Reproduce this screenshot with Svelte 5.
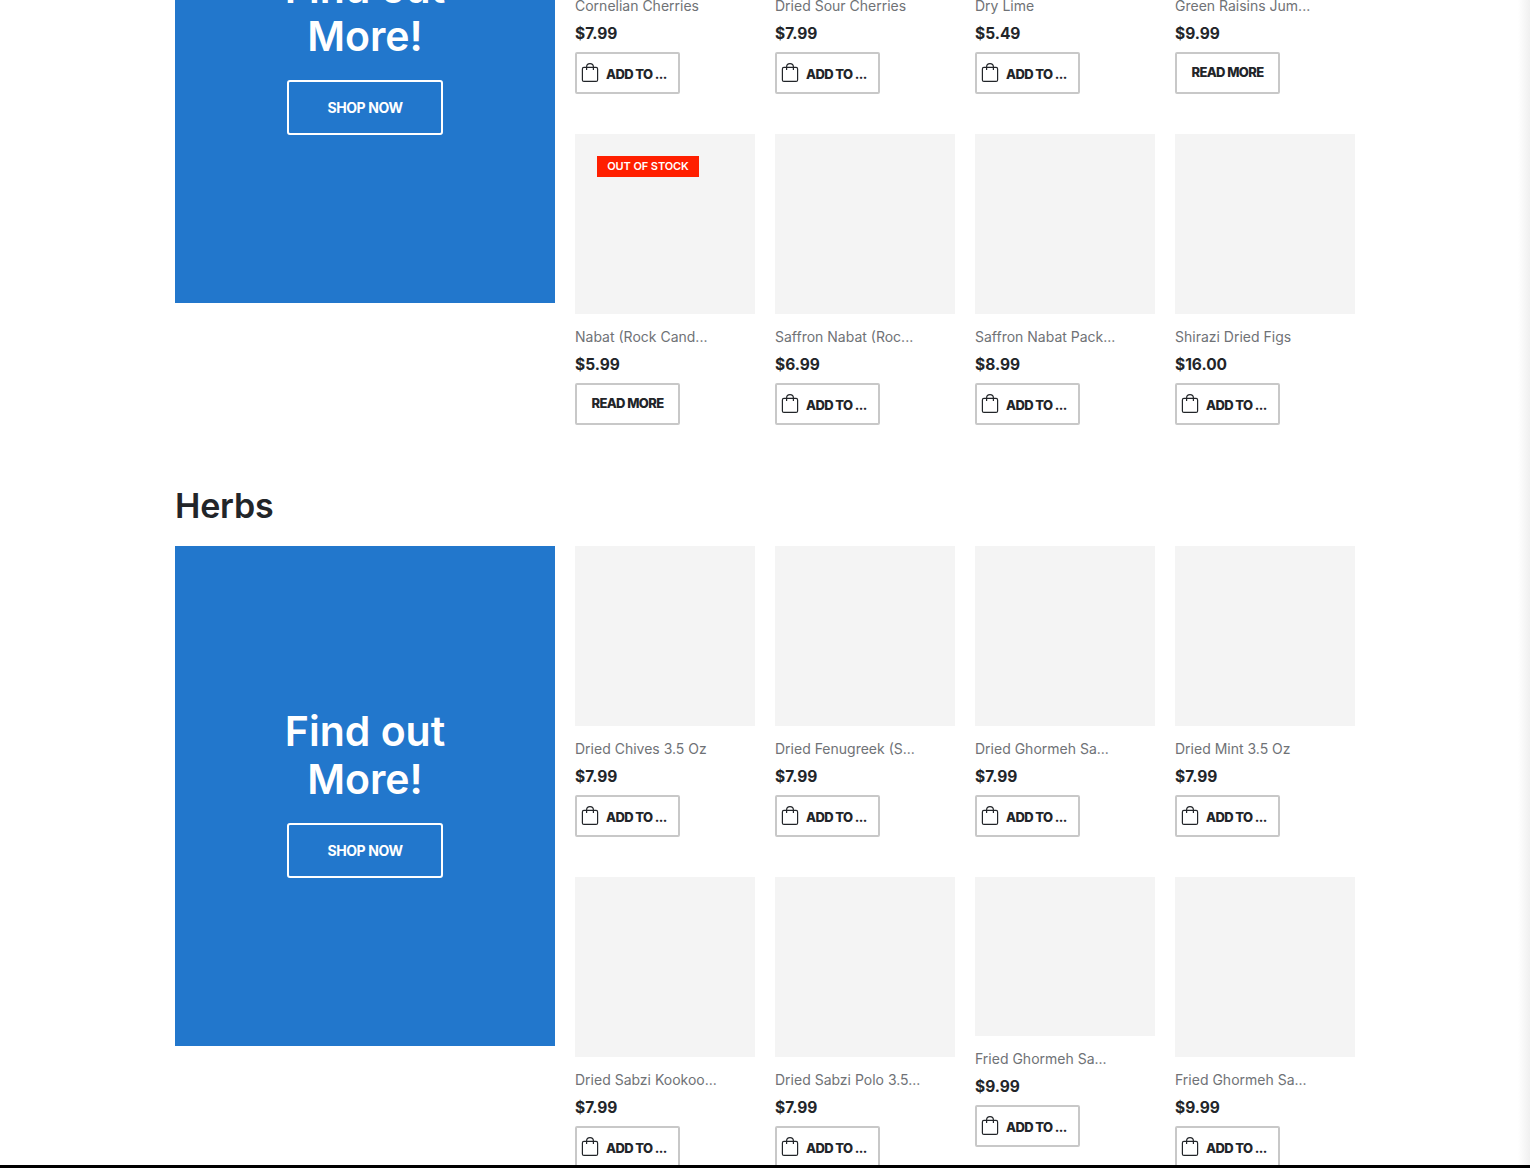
<script>
  const sections = [
    {
      title: "",
      products: [
        { name: "Cornelian Cherries", price: "$7.99" },
        { name: "Dried Sour Cherries", price: "$7.99" },
        { name: "Dry Lime", price: "$5.49" },
        { name: "Green Raisins Jum...", price: "$9.99", readMore: true },
        { name: "Nabat (Rock Cand...", price: "$5.99", readMore: true, soldOut: true },
        { name: "Saffron Nabat (Roc...", price: "$6.99" },
        { name: "Saffron Nabat Pack...", price: "$8.99" },
        { name: "Shirazi Dried Figs", price: "$16.00" }
      ]
    },
    {
      title: "Herbs",
      products: [
        { name: "Dried Chives 3.5 Oz", price: "$7.99" },
        { name: "Dried Fenugreek (S...", price: "$7.99" },
        { name: "Dried Ghormeh Sa...", price: "$7.99" },
        { name: "Dried Mint 3.5 Oz", price: "$7.99" },
        { name: "Dried Sabzi Kookoo...", price: "$7.99" },
        { name: "Dried Sabzi Polo 3.5...", price: "$7.99" },
        { name: "Fried Ghormeh Sa...", price: "$9.99", short: true },
        { name: "Fried Ghormeh Sa...", price: "$9.99" }
      ]
    }
  ];
</script>

<div class="page">
  <main class="container">
    {#each sections as section}
      <section class="section">
        {#if section.title}
          <h2 class="heading">{section.title}</h2>
        {/if}
        <div class="layout">
          <div class="banner">
            <h3>Find out More!</h3>
            <a class="shop" href="#shop">SHOP NOW</a>
          </div>
          <div class="products">
            {#each section.products as product}
              <article class="product">
                <div class="thumb" class:short={product.short}>
                  {#if product.soldOut}
                    <span class="badge">OUT OF STOCK</span>
                  {/if}
                </div>
                <div class="name">{product.name}</div>
                <div class="price">{product.price}</div>
                {#if product.readMore}
                  <a class="btn more" href="#more">READ MORE</a>
                {:else}
                  <a class="btn" href="#add">
                    <svg width="18" height="20" viewBox="0 0 18 20" fill="none" stroke="#222529" stroke-width="1.2">
                      <rect x="1.4" y="5.4" width="15.2" height="14" rx="1.5" />
                      <path d="M5.6 8V5a3.4 3.4 0 0 1 6.8 0v3" />
                    </svg>
                    <span>ADD TO ...</span>
                  </a>
                {/if}
              </article>
            {/each}
          </div>
        </div>
      </section>
    {/each}
  </main>
  <div class="edge"></div>
  <div class="bottom"></div>
</div>

<style>
  :global(body) {
    margin: 0;
    background: #fff;
    overflow: hidden;
  }

  .page {
    position: relative;
    height: 1168px;
    overflow: hidden;
    font-family: Inter, "Noto Sans", sans-serif;
    color: #222529;
  }

  .container {
    width: 1180px;
    margin: -197px 0 0 175px;
    display: flex;
    flex-direction: column;
    gap: 40px;
  }

  .heading {
    margin: 21px 0 20px;
    font-size: 34px;
    line-height: 40px;
    font-weight: 600;
    letter-spacing: -0.2px;
    color: #222529;
  }

  .layout {
    display: grid;
    grid-template-columns: 380px 1fr;
    column-gap: 20px;
    align-items: start;
  }

  .banner {
    height: 500px;
    background: #2277cc;
    color: #fff;
    display: flex;
    flex-direction: column;
    align-items: center;
    justify-content: center;
    gap: 20px;
    padding-bottom: 7px;
    box-sizing: border-box;
  }

  .banner h3 {
    margin: 0;
    width: 200px;
    text-align: center;
    font-size: 41px;
    line-height: 48px;
    font-weight: 600;
  }

  .shop {
    width: 156px;
    height: 55px;
    box-sizing: border-box;
    border: 2px solid #fff;
    border-radius: 3px;
    display: flex;
    align-items: center;
    justify-content: center;
    color: #fff;
    font-size: 14px;
    font-weight: 700;
    letter-spacing: -0.4px;
    text-decoration: none;
  }

  .products {
    display: grid;
    grid-template-columns: repeat(4, 180px);
    gap: 40px 20px;
  }

  .thumb {
    position: relative;
    height: 180px;
    background: #f4f4f4;
  }

  .thumb.short {
    height: 159px;
  }

  .badge {
    position: absolute;
    left: 22px;
    top: 22px;
    width: 102px;
    height: 21px;
    background: #ff1f00;
    color: #fff;
    font-size: 11px;
    line-height: 21px;
    font-weight: 600;
    letter-spacing: -0.1px;
    text-align: center;
  }

  .name {
    margin-top: 14px;
    height: 18px;
    font-size: 14px;
    line-height: 18px;
    color: #6f7276;
    white-space: nowrap;
  }

  .price {
    margin-top: 9px;
    height: 19px;
    font-size: 15.5px;
    line-height: 19px;
    font-weight: 700;
    color: #222529;
  }

  .btn {
    margin-top: 9px;
    width: 105px;
    height: 42px;
    box-sizing: border-box;
    border: 2px solid #c8c8c8;
    border-radius: 2px;
    display: flex;
    align-items: center;
    gap: 7px;
    padding: 0 0 0 4px;
    color: #222529;
    font-size: 13px;
    font-weight: 800;
    letter-spacing: -0.6px;
    text-decoration: none;
    white-space: nowrap;
  }

  .btn svg {
    flex: none;
    margin-top: -2px;
  }

  .btn span {
    padding-top: 2px;
  }

  .btn.more {
    justify-content: center;
    padding: 0 0 2px;
  }

  .edge {
    position: absolute;
    top: 0;
    right: 0;
    bottom: 0;
    width: 12px;
    background: linear-gradient(to right, #fff, #f0f0f0);
  }

  .bottom {
    position: absolute;
    left: 0;
    right: 0;
    bottom: 0;
    height: 3px;
    background: #000;
  }
</style>
